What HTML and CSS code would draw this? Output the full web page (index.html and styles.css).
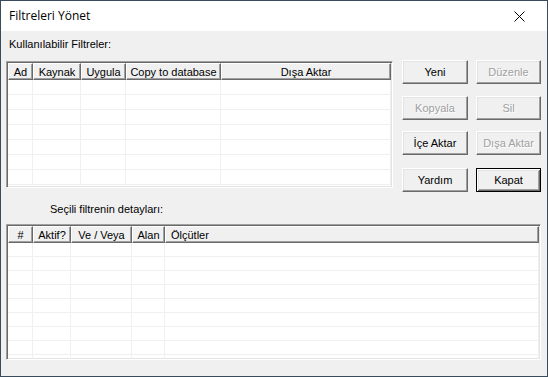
FILE: index.html
```html
<!DOCTYPE html>
<html lang="tr">
<head>
<meta charset="utf-8">
<title>Filtreleri Yönet</title>
<link rel="stylesheet" href="styles.css">
</head>
<body>
<div class="window">
  <div class="titlebar">
    <span class="title">Filtreleri Yönet</span>
    <span class="close">
      <svg width="11" height="11" viewBox="0 0 11 11"><path d="M0.5 0.5 L10.5 10.5 M10.5 0.5 L0.5 10.5" stroke="#000" stroke-width="1" fill="none"/></svg>
    </span>
  </div>
  <div class="content">
    <div class="label label-top">Kullanılabilir Filtreler:</div>
    <div class="top-row">
      <div class="list list-top">
        <table class="grid">
          <colgroup><col style="width:25px"><col style="width:48px"><col style="width:45px"><col style="width:95px"><col></colgroup>
          <thead><tr><th>Ad</th><th>Kaynak</th><th>Uygula</th><th>Copy to database</th><th>Dışa Aktar</th></tr></thead>
          <tbody>
            <tr><td></td><td></td><td></td><td></td><td></td></tr>
            <tr><td></td><td></td><td></td><td></td><td></td></tr>
            <tr><td></td><td></td><td></td><td></td><td></td></tr>
            <tr><td></td><td></td><td></td><td></td><td></td></tr>
            <tr><td></td><td></td><td></td><td></td><td></td></tr>
            <tr><td></td><td></td><td></td><td></td><td></td></tr>
            <tr><td></td><td></td><td></td><td></td><td></td></tr>
          </tbody>
        </table>
      </div>
      <div class="buttons">
        <button class="btn">Yeni</button>
        <button class="btn disabled">Düzenle</button>
        <button class="btn disabled r2">Kopyala</button>
        <button class="btn disabled r2">Sil</button>
        <button class="btn r3">İçe Aktar</button>
        <button class="btn disabled r3">Dışa Aktar</button>
        <button class="btn r4">Yardım</button>
        <button class="btn default r4">Kapat</button>
      </div>
    </div>
    <div class="label label-bottom">Seçili filtrenin detayları:</div>
    <div class="list list-bottom">
      <table class="grid">
        <colgroup><col style="width:25px"><col style="width:38px"><col style="width:61px"><col style="width:33px"><col></colgroup>
        <thead><tr><th>#</th><th>Aktif?</th><th>Ve / Veya</th><th>Alan</th><th class="left">Ölçütler</th></tr></thead>
        <tbody>
          <tr><td></td><td></td><td></td><td></td><td></td></tr>
          <tr><td></td><td></td><td></td><td></td><td></td></tr>
          <tr><td></td><td></td><td></td><td></td><td></td></tr>
          <tr><td></td><td></td><td></td><td></td><td></td></tr>
          <tr><td></td><td></td><td></td><td></td><td></td></tr>
          <tr><td></td><td></td><td></td><td></td><td></td></tr>
          <tr><td></td><td></td><td></td><td></td><td></td></tr>
          <tr><td></td><td></td><td></td><td></td><td></td></tr>
          <tr><td></td><td></td><td></td><td></td><td></td></tr>
        </tbody>
      </table>
    </div>
  </div>
</div>
</body>
</html>
```
FILE: styles.css
```css
* { box-sizing: border-box; }
html, body { margin: 0; padding: 0; }
body {
  width: 548px;
  height: 377px;
  overflow: hidden;
  font-family: "Liberation Sans", Arial, sans-serif;
  font-size: 11px;
  color: #000;
}
.window {
  width: 548px;
  height: 377px;
  border: 1px solid #3a4b5c;
  background: #f0f0f0;
  display: flex;
  flex-direction: column;
}
.titlebar {
  height: 30px;
  flex: none;
  background: #fff;
  display: flex;
  align-items: center;
  justify-content: space-between;
  padding: 0 22px 0 8px;
}
.title {
  font-family: "Open Sans", "Noto Sans", sans-serif;
  font-size: 12px;
  color: #000;
  margin-top: -1px;
}
.close { display: flex; }
.content {
  padding: 7px 0 0 5px;
  display: flex;
  flex-direction: column;
}
.label {
  height: 13px;
  line-height: 13px;
  white-space: nowrap;
}
.label-top { margin-left: 3px; }
.top-row {
  margin-top: 9px;
  display: flex;
  align-items: flex-start;
}
.list {
  background: #fff;
  border: 1px solid;
  border-color: #a0a0a0 #fff #fff #a0a0a0;
  box-shadow: inset 1px 1px 0 #696969, inset -1px -1px 0 #e3e3e3;
  padding: 1px;
  overflow: hidden;
}
.list-top {
  margin-top: 1px;
  width: 387px;
  height: 127px;
}
.list-bottom {
  margin-top: 8px;
  width: 535px;
  height: 136px;
}
.label-bottom {
  margin-top: 11px;
  margin-left: 44px;
}
.grid {
  width: 100%;
  border-collapse: separate;
  border-spacing: 0;
  table-layout: fixed;
}
.grid th {
  height: 17px;
  padding: 0;
  font-weight: normal;
  text-align: center;
  white-space: nowrap;
  overflow: hidden;
  background: #f0f0f0;
  border-top: 1px solid #fff;
  border-left: 1px solid #fff;
  border-right: 1px solid #696969;
  border-bottom: 1px solid #696969;
  box-shadow: inset -1px -1px 0 #a0a0a0;
}
.grid th.left { text-align: left; padding-left: 5px; }
.grid td {
  height: 15px;
  padding: 0;
  border-right: 1px solid #f0f0f0;
  border-bottom: 1px solid #f0f0f0;
}
.list-bottom .grid td { height: 14px; }
.buttons {
  margin-left: 9px;
  display: grid;
  grid-template-columns: 66px 65px;
  column-gap: 8px;
}
.btn {
  height: 24px;
  padding: 0;
  font-family: "Liberation Sans", Arial, sans-serif;
  font-size: 11px;
  font-weight: normal;
  color: #000;
  background: #f0f0f0;
  border: 1px solid;
  border-color: #fff #696969 #696969 #fff;
  box-shadow: inset -1px -1px 0 #a0a0a0, inset 1px 1px 0 #e3e3e3;
}
.btn.disabled {
  color: #a0a0a0;
  text-shadow: 1px 1px 0 #fff;
}
.btn.default {
  border: 1px solid #000;
  box-shadow: inset 1px 1px 0 #fff, inset -1px -1px 0 #696969, inset 2px 2px 0 #e3e3e3, inset -2px -2px 0 #a0a0a0;
}
.r2 { margin-top: 12px; }
.r3 { margin-top: 11px; }
.r4 { margin-top: 13px; }
```
